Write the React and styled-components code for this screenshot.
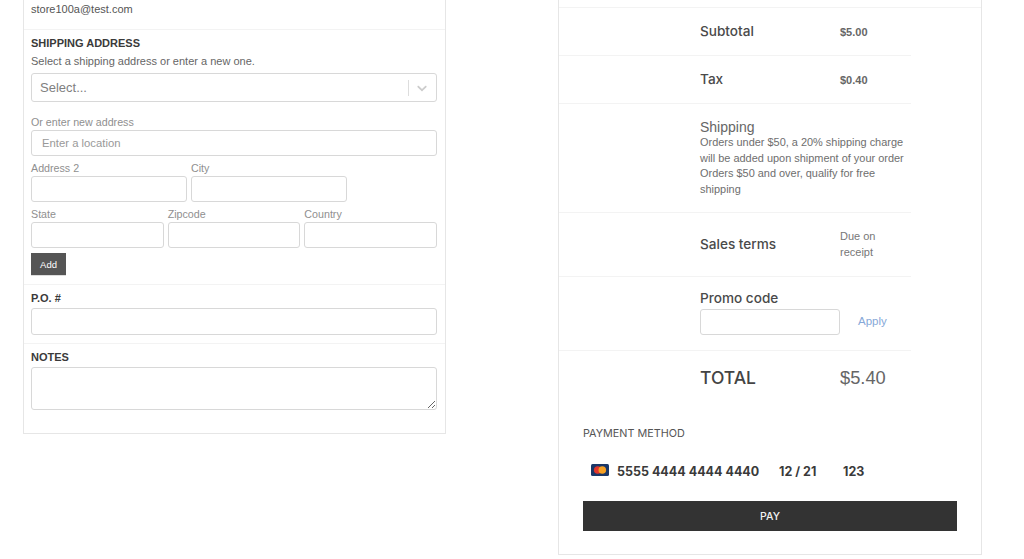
import styled, { createGlobalStyle } from "styled-components";

const GlobalStyle = createGlobalStyle`
  html, body {
    margin: 0;
    height: 559px;
    overflow: hidden;
    background: #fff;
  }
  * {
    box-sizing: border-box;
  }
`;

const Page = styled.div`
  display: flex;
  align-items: flex-start;
  height: 559px;
  padding-left: 23px;
  gap: 112px;
  font-family: "Liberation Sans", Arial, sans-serif;
  color: #555;
`;

const LeftPanel = styled.div`
  width: 423px;
  height: 434px;
  border: 1px solid #e6e6e6;
  border-top: 0;
  flex-shrink: 0;
`;

const Section = styled.div`
  padding: 7px 8px 8px 7px;
  border-bottom: ${(p) => (p.$last ? "0" : "1px solid #f3f3f3")};
`;

const Email = styled.div`
  height: 30px;
  padding: 3px 7px 0;
  font-size: 11px;
  line-height: 13px;
  color: #555;
  border-bottom: 1px solid #f3f3f3;
`;

const Heading = styled.div`
  font-size: 11px;
  line-height: 13px;
  font-weight: 700;
  color: #3a3a3a;
  margin-bottom: ${(p) => p.$gap || "3px"};
`;

const Hint = styled.div`
  font-size: 11px;
  line-height: 13px;
  color: #666;
  margin: 5px 0 5px;
`;

const SelectBox = styled.div`
  display: flex;
  align-items: center;
  height: 29px;
  border: 1px solid #d8d8d8;
  border-radius: 3px;
  padding: 0 6px 0 8px;
  font-size: 13px;
  color: #808080;
`;

const SelectValue = styled.div`
  flex: 1;
`;

const SelectSeparator = styled.span`
  width: 1px;
  height: 16px;
  background: #ddd;
  margin-right: 5px;
`;

const Chevron = styled.svg`
  width: 16px;
  height: 16px;
  fill: #ccc;
`;

const Label = styled.label`
  display: block;
  font-size: 10.7px;
  line-height: 12px;
  color: #8f8f8f;
  margin: ${(p) => p.$margin || "6px 0 2px"};
`;

const Input = styled.input`
  display: block;
  width: ${(p) => p.$width || "100%"};
  height: ${(p) => p.$height || "26px"};
  border: 1px solid #d8d8d8;
  border-radius: 3px;
  padding: 0 10px;
  outline: none;
  background: #fff;
  font-family: inherit;
  font-size: 11.3px;
  color: #555;

  &::placeholder {
    color: #999;
    opacity: 1;
  }
`;

const FieldRow = styled.div`
  display: grid;
  grid-template-columns: ${(p) => p.$columns};
  column-gap: 4px;
`;

const AddButton = styled.button`
  display: block;
  width: 35px;
  height: 23px;
  margin-top: 5px;
  padding: 0;
  border: 1px solid #ddd;
  border-width: 0 0 1px;
  background: #555;
  color: #fff;
  font-family: inherit;
  font-size: 9.5px;
`;

const Notes = styled.textarea`
  display: block;
  width: 100%;
  height: 43px;
  border: 1px solid #d8d8d8;
  border-radius: 3px;
  outline: none;
`;

const RightPanel = styled.div`
  width: 424px;
  height: 555px;
  border: 1px solid #e6e6e6;
  border-top: 0;
  flex-shrink: 0;
  padding-top: 7px;
  font-family: Inter, "Liberation Sans", sans-serif;
`;

const SummaryRows = styled.div`
  border-top: 1px solid #f3f3f3;
`;

const Row = styled.div`
  display: grid;
  grid-template-columns: 140px 1fr;
  align-items: center;
  width: 352px;
  height: ${(p) => p.$height};
  padding: ${(p) => p.$padding || "0"};
  padding-left: 141px;
  border-bottom: 1px solid #f3f3f3;
`;

const FullRow = styled(Row)`
  display: block;
`;

const RowLabel = styled.div`
  font-size: 13.6px;
  line-height: 17px;
  font-weight: 500;
  color: #4a4a4a;
`;

const SmallPrice = styled.div`
  font-family: "Liberation Sans", Arial, sans-serif;
  font-size: 11px;
  font-weight: 700;
  color: #666;
`;

const ShippingTitle = styled.div`
  font-family: "Liberation Sans", Arial, sans-serif;
  font-size: 14px;
  line-height: 15px;
  color: #666;
`;

const ShippingNote = styled.div`
  font-family: "Liberation Sans", Arial, sans-serif;
  font-size: 10.95px;
  line-height: 15.7px;
  color: #6e6e6e;
  width: 210px;
`;

const Terms = styled.div`
  font-family: "Liberation Sans", Arial, sans-serif;
  font-size: 11px;
  line-height: 15.7px;
  color: #777;
  width: 50px;
`;

const PromoLine = styled.div`
  display: flex;
  align-items: center;
  margin-top: 2px;
`;

const ApplyLink = styled.a`
  margin: 0 0 2px 18px;
  font-family: "Liberation Sans", Arial, sans-serif;
  font-size: 11.5px;
  color: #86a8d8;
`;

const TotalLabel = styled.div`
  font-size: 17.5px;
  line-height: 22px;
  font-weight: 500;
  color: #444;
`;

const TotalValue = styled.div`
  font-family: "Liberation Sans", Arial, sans-serif;
  font-size: 18.3px;
  line-height: 22px;
  color: #666;
`;

const TotalRow = styled.div`
  display: grid;
  grid-template-columns: 140px 1fr;
  align-items: center;
  padding-left: 141px;
  height: 54px;
`;

const Payment = styled.div`
  padding: 22px 24px 0;
`;

const PaymentTitle = styled.div`
  font-size: 10.8px;
  line-height: 13px;
  color: #555;
`;

const CardLine = styled.div`
  display: flex;
  align-items: center;
  height: 20px;
  margin-top: 21px;
  padding-left: 8px;
  font-size: 12.5px;
  font-weight: 700;
  color: #3a3a3a;
`;

const CardIcon = styled.svg`
  width: 18px;
  height: 12px;
  margin: -3px 8px 0 0;
`;

const CardPart = styled.span`
  width: ${(p) => p.$width};
  white-space: nowrap;
`;

const PayButton = styled.button`
  display: block;
  width: 100%;
  height: 30px;
  margin-top: 20px;
  border: 0;
  background: #333;
  color: #f2f2f2;
  font-family: inherit;
  font-size: 10.5px;
  font-weight: 500;
`;

export default function App() {
  return (
    <>
      <GlobalStyle />
      <Page>
        <LeftPanel>
          <Email>store100a@test.com</Email>
          <Section>
            <Heading $gap="0">SHIPPING ADDRESS</Heading>
            <Hint>Select a shipping address or enter a new one.</Hint>
            <SelectBox>
              <SelectValue>Select...</SelectValue>
              <SelectSeparator />
              <Chevron viewBox="0 0 20 20">
                <path d="M4.516 7.548c0.436-0.446 1.043-0.481 1.576 0l3.908 3.747 3.908-3.747c0.533-0.481 1.141-0.446 1.576 0 0.436 0.445 0.408 1.197 0 1.615-0.406 0.418-4.695 4.502-4.695 4.502-0.217 0.223-0.502 0.335-0.789 0.335s-0.572-0.112-0.791-0.335c0 0-4.287-4.084-4.695-4.502s-0.436-1.17 0-1.615z" />
              </Chevron>
            </SelectBox>
            <Label $margin="14px 0 2px">Or enter new address</Label>
            <Input placeholder="Enter a location" />
            <FieldRow $columns="156px 156px">
              <div>
                <Label>Address 2</Label>
                <Input />
              </div>
              <div>
                <Label>City</Label>
                <Input />
              </div>
            </FieldRow>
            <FieldRow $columns="1fr 1fr 1fr">
              <div>
                <Label>State</Label>
                <Input />
              </div>
              <div>
                <Label>Zipcode</Label>
                <Input />
              </div>
              <div>
                <Label>Country</Label>
                <Input />
              </div>
            </FieldRow>
            <AddButton>Add</AddButton>
          </Section>
          <Section>
            <Heading>P.O. #</Heading>
            <Input $height="27px" />
          </Section>
          <Section $last>
            <Heading>NOTES</Heading>
            <Notes />
          </Section>
        </LeftPanel>

        <RightPanel>
          <SummaryRows>
            <Row $height="48px">
              <RowLabel>Subtotal</RowLabel>
              <SmallPrice>$5.00</SmallPrice>
            </Row>
            <Row $height="48px">
              <RowLabel>Tax</RowLabel>
              <SmallPrice>$0.40</SmallPrice>
            </Row>
            <FullRow $height="109px" $padding="16px 0 0">
              <ShippingTitle>Shipping</ShippingTitle>
              <ShippingNote>
                Orders under $50, a 20% shipping charge will be added upon
                shipment of your order
                <br />
                Orders $50 and over, qualify for free shipping
              </ShippingNote>
            </FullRow>
            <Row $height="64px">
              <RowLabel>Sales terms</RowLabel>
              <Terms>Due on receipt</Terms>
            </Row>
            <FullRow $height="74px" $padding="13px 0 0">
              <RowLabel>Promo code</RowLabel>
              <PromoLine>
                <Input $width="140px" />
                <ApplyLink>Apply</ApplyLink>
              </PromoLine>
            </FullRow>
          </SummaryRows>
          <TotalRow>
            <TotalLabel>TOTAL</TotalLabel>
            <TotalValue>$5.40</TotalValue>
          </TotalRow>
          <Payment>
            <PaymentTitle>PAYMENT METHOD</PaymentTitle>
            <CardLine>
              <CardIcon viewBox="0 0 18 12">
                <rect width="18" height="12" rx="1.5" fill="#1a3768" />
                <circle cx="6.7" cy="6" r="3.8" fill="#e2352b" />
                <circle cx="11.3" cy="6" r="3.8" fill="#f5a024" />
              </CardIcon>
              <CardPart $width="162px">5555 4444 4444 4440</CardPart>
              <CardPart $width="64px">12 / 21</CardPart>
              <CardPart>123</CardPart>
            </CardLine>
            <PayButton>PAY</PayButton>
          </Payment>
        </RightPanel>
      </Page>
    </>
  );
}
